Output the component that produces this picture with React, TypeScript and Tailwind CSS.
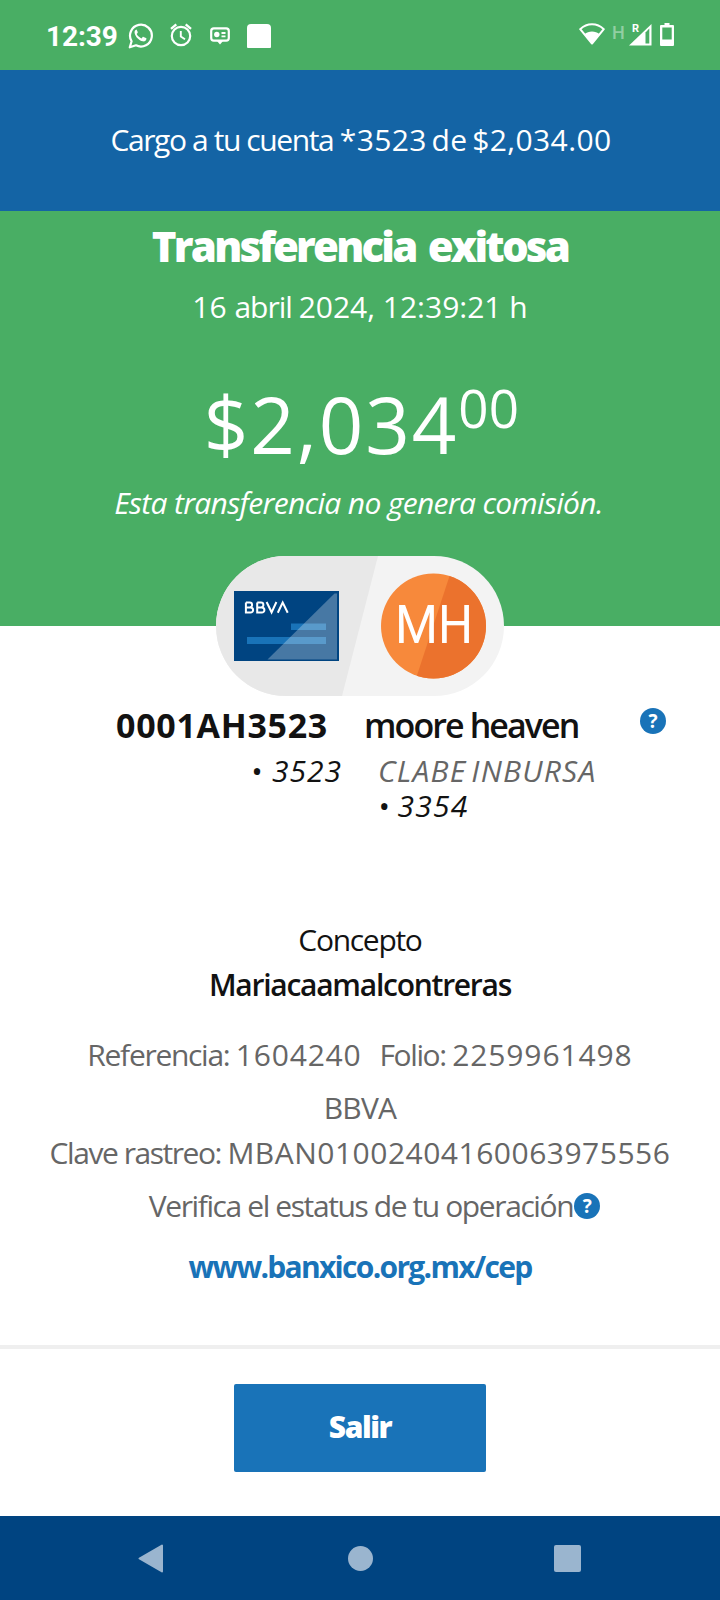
import type { ReactNode } from "react";

function StatusBar() {
  return (
    <div className="flex h-[70px] items-center justify-between bg-[#49ae64] pl-[46px] pr-[46px] text-white">
      <div className="flex items-center">
        <span className="w-[82px] pt-[3px] font-[Roboto] text-[28px] font-bold leading-none tracking-[-0.1px]">
          12:39
        </span>
        {/* WhatsApp */}
        <svg className="mt-[1px] h-[26px] w-[25px]" viewBox="0 0 25 26" fill="none">
          <path
            d="M1.8 24.3 3.6 18.2A10.9 10.9 0 1 1 8 22.3Z"
            stroke="currentColor"
            strokeWidth="2.2"
            strokeLinejoin="round"
          />
          <path
            d="M8.6 6.6c-1.6.3-2.3 1.8-2 3.3.9 4 4.2 7.3 8.2 8.4 1.7.4 3.3-.4 3.6-2.2.1-.6 0-.8-.4-1l-2.5-1.2c-.4-.2-.7-.1-1 .3l-1 1.2c-2.2-.9-3.8-2.4-4.8-4.4l.8-1c.3-.3.3-.6.2-1l-1-2.3z"
            fill="currentColor"
          />
        </svg>
        {/* Alarm */}
        <svg className="ml-[17px] h-[24px] w-[22px]" viewBox="0 0 22 24" fill="none" stroke="currentColor">
          <circle cx="11" cy="13" r="9.2" strokeWidth="2.2" />
          <path d="M1 5.8 6.3 1.4M21 5.8 15.7 1.4" strokeWidth="2.4" />
          <path d="M10.8 8v5.5l4.2 2.7" strokeWidth="1.9" />
        </svg>
        {/* Contact card bubble */}
        <svg className="mt-[1px] ml-[18px] h-[18px] w-[20px]" viewBox="0 0 20 18" fill="none">
          <rect x="1.2" y="1.4" width="17.6" height="12.2" rx="2.6" stroke="currentColor" strokeWidth="2.2" />
          <path d="M7 14h6l-3 3.6z" fill="currentColor" />
          <circle cx="6.8" cy="7.5" r="2.7" fill="currentColor" />
          <path d="M11.5 6h4M11.5 9.3h4" stroke="currentColor" strokeWidth="1.8" />
        </svg>
        <span className="ml-[17px] mt-[1px] h-6 w-6 rounded-t-[4px] rounded-b-[1px] bg-white" />
      </div>
      <div className="flex items-center">
        <svg className="mb-[2px] h-[22px] w-[26px]" viewBox="0 0 26 22">
          <path d="M1.2 6.2C8-.3 18-.3 24.8 6.2L13 20.5Z" fill="none" stroke="currentColor" strokeWidth="2" strokeLinejoin="round" />
          <path d="M5.5 11.2C9.5 7.6 16.5 7.6 20.5 11.2L13 21Z" fill="currentColor" />
        </svg>
        <span className="ml-[7px] mb-1 w-[14px] font-[Roboto] text-[18px] font-medium leading-none text-[#92cea2]">
          H
        </span>
        <div className="relative mb-[1px] ml-[3px] h-[22px] w-[23px]">
          <svg className="h-[22px] w-[23px]" viewBox="0 0 23 22">
            <path d="M0 21.5 22.5 0v21.5Z" fill="currentColor" />
            <path d="M16.5 8.5 20.3 4.5v15h-3.8Z" fill="#49ae64" />
          </svg>
          <span className="absolute left-[3px] -top-px font-[Roboto] text-[11px] font-bold leading-none">R</span>
        </div>
        <svg className="ml-[8px] h-[24px] w-[14px]" viewBox="0 0 14 24">
          <path d="M4.5 0h5v2H13a1 1 0 0 1 1 1v19a1 1 0 0 1-1 1H1a1 1 0 0 1-1-1V3a1 1 0 0 1 1-1h3.5Z" fill="currentColor" />
          <path d="M2.3 4.5h9.4v12H2.3Z" fill="#49ae64" />
        </svg>
      </div>
    </div>
  );
}

function HelpIcon() {
  return (
    <span className="flex h-[26px] w-[26px] shrink-0 items-center justify-center rounded-full bg-[#1973b8] text-[19px] font-bold leading-none tracking-normal text-white">
      ?
    </span>
  );
}

function TransferBadge() {
  return (
    <svg className="relative mx-auto -mt-[70px] block h-[140px] w-[288px]" viewBox="0 0 288 140">
      <defs>
        <clipPath id="pill">
          <rect width="288" height="140" rx="70" />
        </clipPath>
        <clipPath id="avatar">
          <circle cx="217.5" cy="70" r="52.5" />
        </clipPath>
      </defs>
      <g clipPath="url(#pill)">
        <rect width="288" height="140" fill="#f3f3f3" />
        <path d="M0 0h162l-36 140H0Z" fill="#e8e8e8" />
      </g>
      {/* Origin card */}
      <rect x="18" y="35" width="105" height="70" fill="#004481" />
      <path d="M75 67.5h35v6.5H75ZM31 81h79v7H31Z" fill="#1973b8" />
      <path d="M118.500 37.500h2.500v66H51.500Z" fill="#fff" fillOpacity="0.28" />
      <g fill="none" stroke="#fff" strokeWidth="2">
        <path d="M29.900 46.600v10h4.600a2.600 2.600 0 0 0 0-5.200h-4.600m0 0h3.800a2.400 2.400 0 0 0 0-4.800h-3.800" />
        <path d="M41.200 46.600v10h4.600a2.600 2.600 0 0 0 0-5.200h-4.600m0 0h3.800a2.400 2.400 0 0 0 0-4.800h-3.800" />
        <path d="m50.600 46 5 10.300 4.800-10.300" />
        <path d="m61.800 56.800 4.900-10.300 5 10.300" />
      </g>
      {/* Recipient avatar */}
      <g clipPath="url(#avatar)">
        <rect x="165" y="17" width="105" height="106" fill="#f7893b" />
        <path d="M234.500 17H271v107h-71.500Z" fill="#eb722d" />
      </g>
      <text
        x="179"
        y="87"
        textLength="78"
        lengthAdjust="spacingAndGlyphs"
        fill="#fff"
        className="font-[Roboto] text-[53px]"
      >
        MH
      </text>
    </svg>
  );
}

function Line({ className = "", children }: { className?: string; children: ReactNode }) {
  return (
    <p className={`flex h-11 items-center justify-center whitespace-pre text-[30px] leading-[44px] ${className}`}>
      {children}
    </p>
  );
}

export default function App() {
  return (
    <main className="flex h-[1600px] w-[720px] flex-col overflow-hidden bg-white font-['Open_Sans',sans-serif] text-[#121212]">
      <StatusBar />

      <div className="flex h-[141px] shrink-0 items-center justify-center bg-[#1464a5] pb-[2px] pl-[2px] text-white">
        <Line>
          <span className="tracking-[-1.4px]">Cargo a tu cuenta </span>
          <span className="tracking-[0.4px] [word-spacing:-3.5px]">*3523 de $2,034.00</span>
        </Line>
      </div>

      <section className="flex h-[415px] shrink-0 flex-col items-center bg-[#49ae64] pt-[7px] text-white">
        <h1 className="text-[42px] font-extrabold leading-[56px] tracking-[-2.8px] [word-spacing:4px]">
          Transferencia exitosa
        </h1>
        <Line className="mt-[11px]">
          <span>16 </span>
          <span className="tracking-[-1px]">abril </span>
          <span>2024, 12:39:21 h</span>
        </Line>
        <p className="mt-[47px] flex h-24 pl-[3px] text-[78px] leading-[96px] tracking-[1.9px]">
          $2,034
          <span className="text-[53px] leading-[63px] tracking-[0.2px]">00</span>
        </p>
        <Line className="mt-[9px] pr-[3px] italic tracking-[-0.67px]">Esta transferencia no genera comisión.</Line>
      </section>

      <TransferBadge />

      <section className="mt-[7px] flex">
        <div className="w-[342px] text-right">
          <h2 className="pr-[14px] text-[34px] font-bold leading-[44px] tracking-[0.7px]">0001AH3523</h2>
          <p className="mt-[6px] text-[30px] italic leading-[35px] tracking-[1px]">• 3523</p>
        </div>
        <div className="ml-[22px] w-[276px] whitespace-nowrap">
          <h2 className="text-[34px] font-semibold leading-[44px] tracking-[-1.9px]">moore heaven</h2>
          <div className="mt-[6px] pl-[14px] text-[30px] italic leading-[35px]">
            <p className="h-[35px] tracking-[1.2px] text-[#666] [word-spacing:-4px]">CLABE INBURSA</p>
            <p className="tracking-[1.2px] [word-spacing:-2px]">• 3354</p>
          </div>
        </div>
        <div className="pt-[5px]">
          <HelpIcon />
        </div>
      </section>

      <section className="mt-[95px] flex flex-col text-[#666]">
        <Line className="tracking-[-1.3px] text-[#121212]">Concepto</Line>
        <Line className="mt-[1px] font-semibold tracking-[-1.25px] text-[#121212]">Mariacaamalcontreras</Line>
        <Line className="mt-[26px] gap-[18px]">
          <span>
            <span className="tracking-[-1.3px]">Referencia: </span>
            <span className="tracking-[0.8px]">1604240</span>
          </span>
          <span>
            <span className="tracking-[-1.4px]">Folio: </span>
            <span className="tracking-[0.9px]">2259961498</span>
          </span>
        </Line>
        <Line className="mt-[9px] tracking-[-0.8px]">BBVA</Line>
        <Line className="mt-[1px]">
          <span className="tracking-[-1.45px]">Clave rastreo: </span>
          <span className="tracking-[0.5px]">MBAN01002404160063975556</span>
        </Line>
        <Line className="mt-[9px] pl-[29px] tracking-[-1.4px]">
          <span>Verifica el estatus de tu operación</span>
          <span className="ml-[1px]">
            <HelpIcon />
          </span>
        </Line>
        <Line className="mt-[17px] font-bold tracking-[-1.7px] text-[#1973b8]">www.banxico.org.mx/cep</Line>
      </section>

      <footer className="mt-auto flex h-[171px] shrink-0 items-start justify-center border-t-4 border-[#efefef] pt-[35px]">
        <button className="h-[88px] w-[252px] rounded-[2px] bg-[#1973b8] pb-1 text-[30px] font-extrabold tracking-[-1.4px] text-white">
          Salir
        </button>
      </footer>

      <nav className="flex h-[84px] shrink-0 items-center justify-between bg-[#004481] pl-[138px] pr-[139px] text-[#9ab5cf]">
        <svg className="h-[29px] w-[25px]" viewBox="0 0 25 29">
          <path d="M24 1.5v26L1.5 14.5Z" fill="currentColor" stroke="currentColor" strokeWidth="2" strokeLinejoin="round" />
        </svg>
        <span className="ml-[4px] h-[25px] w-[25px] rounded-full bg-[#9ab5cf]" />
        <span className="h-[27px] w-[27px] rounded-[2px] bg-[#9ab5cf]" />
      </nav>
    </main>
  );
}
